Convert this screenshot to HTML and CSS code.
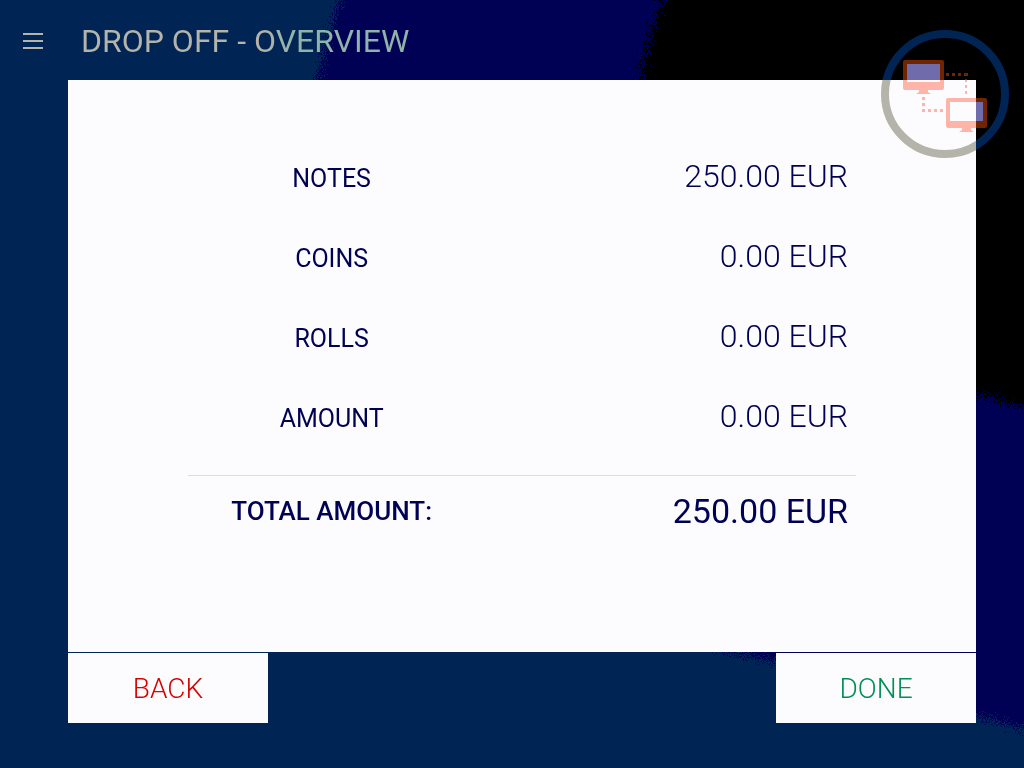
FILE: index.html
```html
<!DOCTYPE html>
<html lang="en">
<head>
<meta charset="utf-8">
<meta name="viewport" content="width=device-width, initial-scale=1">
<title>Drop off - Overview</title>
<link rel="stylesheet" href="styles.css">
</head>
<body>
<svg class="backdrop" viewBox="0 0 1024 768" preserveAspectRatio="none" aria-hidden="true">
  <defs>
    <filter id="grain" x="-5%" y="-5%" width="110%" height="110%">
      <feTurbulence type="fractalNoise" baseFrequency="0.9" numOctaves="2" seed="4" result="noise"/>
      <feDisplacementMap in="SourceGraphic" in2="noise" scale="34" xChannelSelector="R" yChannelSelector="G"/>
    </filter>
  </defs>
  <g filter="url(#grain)">
    <path fill="#000054" d="M356 -40 L340 0 Q328 40 317 80 C250 400 500 600 750 656 Q870 681 976 716 L1024 729 L1080 747 L1080 -40 Z"/>
    <path fill="#000000" d="M676 -40 L661 0 Q648 40 639 80 C600 240 780 340 976 394 L1024 407 L1080 427 L1080 -40 Z"/>
  </g>
</svg>
<div class="screen">
  <header class="topbar">
    <button class="menu" type="button" aria-label="Menu">
      <svg width="20" height="16" viewBox="0 0 20 16" shape-rendering="crispEdges"><path fill="#b4b4aa" d="M0 0h20v2H0zM0 7h20v2H0zM0 14h20v2H0z"/></svg>
    </button>
    <h1 class="title">DROP OFF - OVERVIEW</h1>
  </header>
  <main class="card">
    <table class="amounts">
      <tbody>
        <tr><th scope="row">NOTES</th><td>250.00 EUR</td></tr>
        <tr><th scope="row">COINS</th><td>0.00 EUR</td></tr>
        <tr><th scope="row">ROLLS</th><td>0.00 EUR</td></tr>
        <tr><th scope="row">AMOUNT</th><td>0.00 EUR</td></tr>
      </tbody>
    </table>
    <table class="amounts total">
      <tbody>
        <tr><th scope="row">TOTAL AMOUNT:</th><td>250.00 EUR</td></tr>
      </tbody>
    </table>
  </main>
  <footer class="actions">
    <button class="action back" type="button">BACK</button>
    <button class="action done" type="button">DONE</button>
  </footer>
</div>
<svg class="badge" viewBox="881 30 128 128" role="img" aria-label="Network connection">
  <defs>
    <clipPath id="on-card"><path d="M881 80H976V158H881z"/></clipPath>
    <clipPath id="off-card"><path d="M881 30H1009V158H976V80H881z"/></clipPath>
    <g id="network">
      <circle class="ring" cx="945" cy="94" r="60"/>
      <g id="monitor">
        <rect class="frame" x="903" y="60" width="41" height="30" rx="2"/>
        <rect class="glass" x="907" y="64" width="33" height="18"/>
        <path class="frame" d="M919 90h9v2l3 2h-15l3-2z"/>
      </g>
      <use href="#monitor" x="43" y="38"/>
      <rect class="glass" x="950" y="102" width="33" height="19"/>
      <path class="frame" shape-rendering="crispEdges" d="M946 73h3v3h-3zM952 73h3v3h-3zM958 73h3v3h-3zM964 73h4v3h-4zM965 79h2v3h-2zM965 85h2v3h-2zM965 91h2v3h-2zM922 97h3v3h-3zM922 103h3v3h-3zM922 109h3v3h-3zM928 109h3v3h-3zM934 109h3v3h-3zM940 109h3v3h-3z"/>
    </g>
  </defs>
  <g class="dark" clip-path="url(#off-card)"><use href="#network"/></g>
  <g class="light" clip-path="url(#on-card)"><use href="#network"/></g>
</svg>
</body>
</html>
```
FILE: styles.css
```css
* {
  box-sizing: border-box;
}

body {
  margin: 0;
  background: #002454;
  color: #000054;
  font-family: Roboto, "Liberation Sans", sans-serif;
  font-weight: 300;
}

.backdrop {
  position: fixed;
  inset: 0;
  width: 100%;
  height: 100%;
}

.screen {
  position: relative;
  display: flex;
  flex-direction: column;
  min-height: 100vh;
  padding: 0 48px 45px 68px;
}

.topbar {
  display: flex;
  align-items: center;
  gap: 28px;
  height: 80px;
  margin-left: -55px;
  padding-top: 2px;
}

.menu {
  display: flex;
  padding: 10px;
  border: 0;
  background: none;
}

.title {
  margin: 0;
  background: linear-gradient(to right, #b4b4aa 55%, #90b4aa 65%);
  background-clip: text;
  -webkit-background-clip: text;
  color: transparent;
  font-size: 32px;
  font-weight: 400;
  line-height: 40px;
}

.card {
  flex: 1;
  padding: 60px 120px 40px;
  background: #fcfcff;
}

.amounts {
  width: 100%;
  table-layout: fixed;
  border-collapse: collapse;
}

.amounts tr {
  height: 80px;
}

.amounts th,
.amounts td {
  padding: 0 8px;
  font-weight: 300;
  vertical-align: baseline;
  line-height: 72px;
}

.amounts th {
  width: 43%;
  font-size: 25px;
  font-weight: 400;
}

.amounts td {
  text-align: right;
  font-size: 32px;
}

.total {
  margin-top: 15px;
  border-top: 1px solid #d8d8fc;
}

.total tr {
  height: 70px;
}

.total th,
.total td {
  line-height: 40px;
  vertical-align: middle;
}

.total th {
  font-size: 26px;
  font-weight: 500;
  padding: 0;
}

.total td {
  font-size: 34px;
  font-weight: 400;
}

.actions {
  display: flex;
  justify-content: space-between;
  margin-top: 1px;
}

.action {
  width: 200px;
  height: 70px;
  border: 0;
  background: #fcfcff;
  font-family: inherit;
  font-size: 28px;
  font-weight: 300;
}

.back {
  color: #d80000;
}

.done {
  color: #009054;
}

.badge {
  position: absolute;
  top: 30px;
  right: 15px;
  width: 128px;
  height: 128px;
}

.ring {
  fill: none;
  stroke: var(--ring);
  stroke-width: 8px;
}

.frame {
  fill: var(--frame);
}

.glass {
  fill: var(--glass);
}

.dark {
  --ring: #002454;
  --frame: #702400;
  --glass: #706cac;
}

.light {
  --ring: #b4b4aa;
  --frame: #ffb4aa;
  --glass: #fcfcff;
}
```
